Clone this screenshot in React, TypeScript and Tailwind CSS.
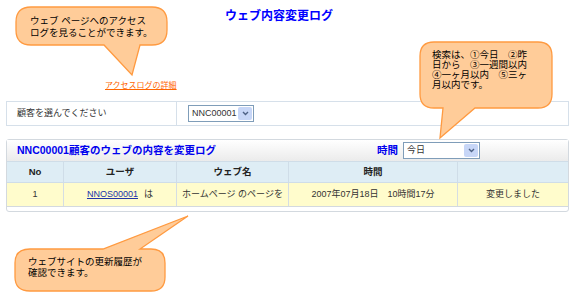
import React from "react";

const font = "font-['Liberation_Sans','Noto_Sans_CJK_JP',sans-serif]";

// fake windows-style select box
function SelectBox({ value, w }: { value: string; w: string }) {
  return (
    <div className={`flex h-[17px] ${w} items-stretch border border-[#7f9db9] bg-white`}>
      <div className="flex flex-1 items-center overflow-hidden pl-[3px] text-[9px] text-[#333]">{value}</div>
      <div className="m-px flex w-[14px] items-center justify-center rounded-[2px] bg-[#c7d6f7]">
        <svg width="7" height="5" viewBox="0 0 7 5">
          <path d="M1 1 L3.5 3.5 L6 1" fill="none" stroke="#4d6185" strokeWidth="1.4" />
        </svg>
      </div>
    </div>
  );
}

function Callouts() {
  return (
    <svg className="pointer-events-none absolute inset-0" width="575" height="298" viewBox="0 0 575 298">
      <g fill="#ffcc99" stroke="#ff9a40" strokeWidth="1.3">
        <path d="M31 7 H152 Q167 7 167 22 V30 Q167 45 152 45 H140 L132 75 L104 45 H31 Q16 45 16 30 V22 Q16 7 31 7 Z" />
        <path d="M434 42 H538 Q552 42 552 56 V94 Q552 108 538 108 H475 L440 138 L443 108 H434 Q420 108 420 94 V56 Q420 42 434 42 Z" />
        <path d="M30 249 H103 L188 216 L140 249 H151 Q165 249 165 263 V277 Q165 291 151 291 H30 Q15 291 15 277 V263 Q15 249 30 249 Z" />
      </g>
    </svg>
  );
}

export default function App() {
  const cols = ["w-[57px]", "w-[113px]", "w-[112px]", "w-[169px]", "flex-1"];
  return (
    <div className={`relative h-[298px] w-[575px] overflow-hidden bg-white ${font}`}>
      <div className="flex justify-center pr-[17px] pt-[9px]">
        <h1 className="text-[12px] font-bold leading-[14px] text-[#0000ff]">ウェブ内容変更ログ</h1>
      </div>

      <div className="pl-[105px] pt-[58px] text-[8px] leading-[10px]">
        <span className="text-[#ff6600] underline">アクセスログの詳細</span>
      </div>

      {/* customer select row */}
      <div className="mx-[6px] mt-[10px] flex h-[25px] border border-[#d6e0ea]">
        <div className="flex w-[170px] items-center border-r border-[#d6e0ea] pl-[10px] text-[9px] text-[#333]">
          顧客を選んでください
        </div>
        <div className="flex items-center pl-[11px]">
          <SelectBox value="NNC00001" w="w-[66px]" />
        </div>
      </div>

      {/* log panel */}
      <div className="mx-[6px] mt-[13px] rounded-[3px] border border-[#d3d9df] pb-[4px]">
        <div className="flex h-[21px] items-center bg-gradient-to-b from-white to-[#ebebeb] pl-[10px] pr-[88px]">
          <span className="text-[10.5px] font-bold text-[#0000ee]">NNC00001顧客のウェブの内容を変更ログ</span>
          <span className="ml-auto mr-[5px] text-[10.5px] font-bold text-[#0000ee]">時間</span>
          <SelectBox value="今日" w="w-[77px]" />
        </div>
        <div className="flex h-[22px] border-y border-[#cfdde8] bg-[#deedf5] text-[9.5px] font-bold text-[#222]">
          {["No", "ユーザ", "ウェブ名", "時間", ""].map((t, i) => (
            <div key={i} className={`${cols[i]} flex items-center justify-center ${i < 4 ? "border-r border-[#cfdde8]" : ""}`}>
              {t}
            </div>
          ))}
        </div>
        <div className="flex h-[24px] border-b border-[#d3d9df] bg-[#fffccc] text-[9px] text-[#333]">
          <div className={`${cols[0]} flex items-center justify-center border-r border-[#d5dde3]`}>1</div>
          <div className={`${cols[1]} flex items-center justify-center gap-[6px] border-r border-[#d5dde3]`}>
            <span className="text-[#2233aa] underline">NNOS00001</span>
            <span>は</span>
          </div>
          <div className={`${cols[2]} flex items-center justify-center border-r border-[#d5dde3]`}>ホームページ のページを</div>
          <div className={`${cols[3]} flex items-center justify-center border-r border-[#d5dde3]`}>2007年07月18日　10時間17分</div>
          <div className={`${cols[4]} flex items-center justify-center`}>変更しました</div>
        </div>
      </div>

      <Callouts />

      <div className="absolute left-[30px] top-[15px] text-[9.5px] leading-[12px] text-black">
        <p>ウェブ ページへのアクセス</p>
        <p>ログを見ることができます。</p>
      </div>
      <div className="absolute left-[432px] top-[50px] text-[9.5px] leading-[10px] text-black">
        <p>検索は、①今日　②昨</p>
        <p>日から　③一週間以内</p>
        <p>④一ヶ月以内　⑤三ヶ</p>
        <p>月以内です。</p>
      </div>
      <div className="absolute left-[28px] top-[256px] text-[9.5px] leading-[11px] text-black">
        <p>ウェブサイトの更新履歴が</p>
        <p>確認できます。</p>
      </div>
    </div>
  );
}
